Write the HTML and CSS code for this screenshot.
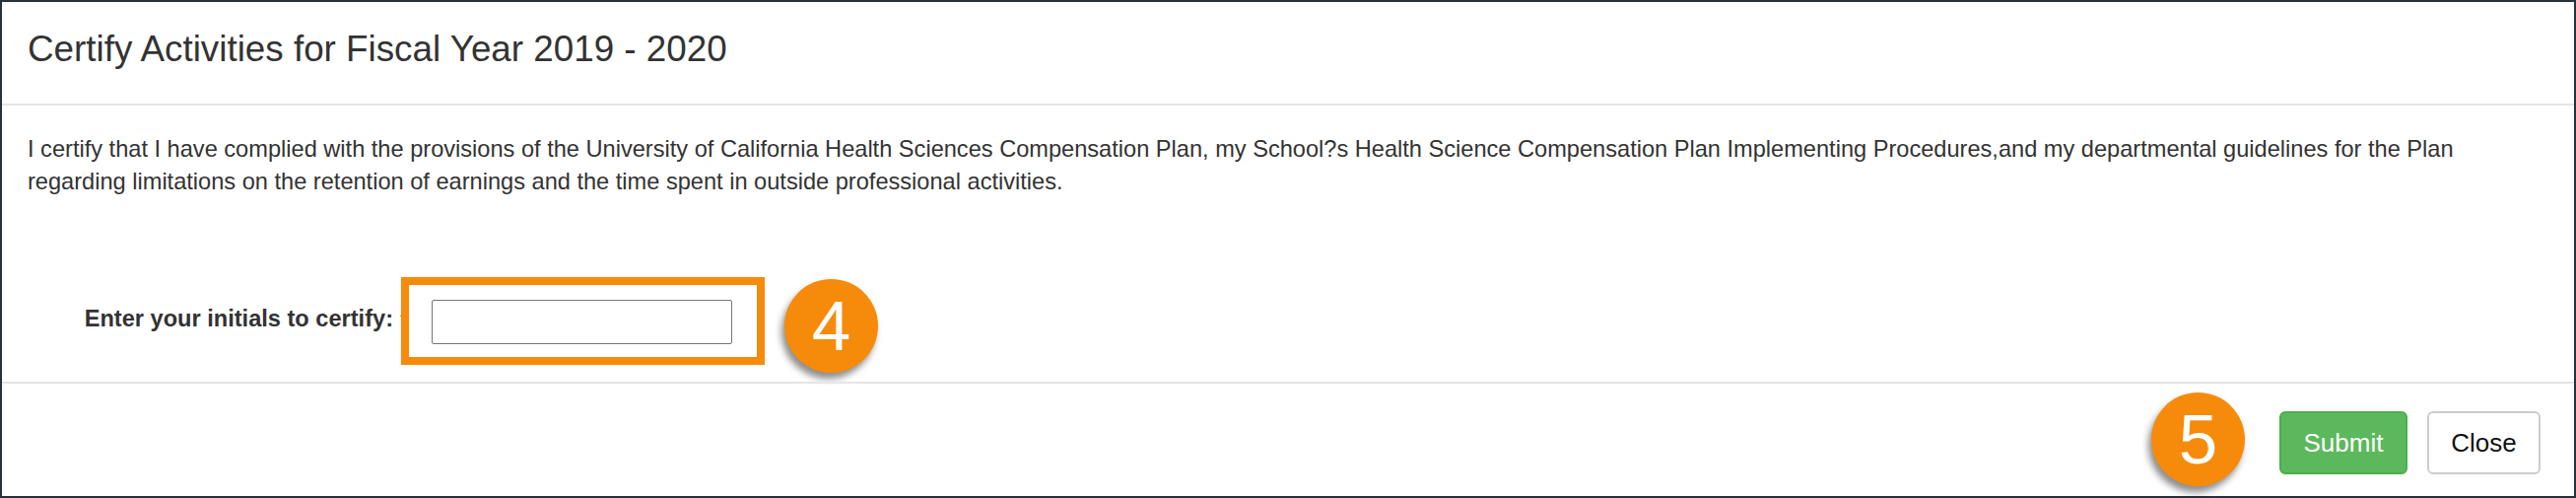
FILE: index.html
```html
<!DOCTYPE html>
<html lang="en">
<head>
<meta charset="utf-8">
<title>Certify Activities</title>
<link rel="stylesheet" href="styles.css">
</head>
<body>
<div class="modal">
  <div class="modal-header">
    <h4 class="modal-title">Certify Activities for Fiscal Year 2019 - 2020</h4>
  </div>
  <div class="modal-body">
    <p class="statement">I certify that I have complied with the provisions of the University of California Health Sciences Compensation Plan, my School?s Health Science Compensation Plan Implementing Procedures,and my departmental guidelines for the Plan regarding limitations on the retention of earnings and the time spent in outside professional activities.</p>
    <div class="form-row">
      <label class="form-label" for="initials">Enter your initials to certify:</label>
      <span class="required">*</span>
      <span class="input-wrap">
        <input class="form-control" id="initials" type="text">
        <span class="highlight"></span>
        <span class="step step-4">4</span>
      </span>
    </div>
  </div>
  <div class="modal-footer">
    <span class="step step-5">5</span>
    <button class="btn btn-success" type="button">Submit</button>
    <button class="btn btn-default" type="button">Close</button>
  </div>
</div>
</body>
</html>
```

FILE: styles.css
```css
html, body {
  margin: 0;
  padding: 0;
  background: #ffffff;
}

body {
  font-family: "Liberation Sans", Arial, Helvetica, sans-serif;
  color: #333333;
}

.modal {
  position: relative;
  box-sizing: border-box;
  width: 2614px;
  height: 505px;
  border: 2px solid #27313d;
  background: #ffffff;
}

.modal-header {
  padding: 28px 26px 35px 26px;
  border-bottom: 2px solid #e5e5e5;
}

.modal-title {
  margin: 0;
  font-size: 36.8px;
  line-height: 40px;
  font-weight: normal;
  color: #333333;
}

.modal-body {
  padding: 28px 26px 38px 26px;
}

.statement {
  margin: 0;
  font-size: 23.6px;
  line-height: 33.3px;
}

.form-row {
  display: flex;
  align-items: center;
  margin-top: 102px;
  height: 45px;
}

.form-label {
  box-sizing: border-box;
  width: 371px;
  text-align: right;
  font-size: 23.6px;
  font-weight: bold;
  line-height: 33px;
  position: relative;
  top: -3px;
}

.required {
  color: #e00000;
  font-size: 23.3px;
  line-height: 33px;
  margin-left: 7px;
  width: 32px;
}

.input-wrap {
  position: relative;
  display: block;
}

.form-control {
  display: block;
  box-sizing: border-box;
  width: 305px;
  height: 45px;
  margin: 0;
  padding: 6px 12px;
  border: 1px solid #767676;
  border-radius: 2px;
  background: #ffffff;
  font-family: "Liberation Sans", Arial, sans-serif;
  font-size: 23.3px;
}

.highlight {
  position: absolute;
  left: -31px;
  right: -33px;
  top: -23px;
  bottom: -21px;
  border: 8px solid #f68b0b;
  pointer-events: none;
}

.step {
  position: absolute;
  display: flex;
  align-items: center;
  justify-content: center;
  width: 95px;
  height: 95px;
  border-radius: 50%;
  background: #f68b0b;
  color: #ffffff;
  font-family: "Liberation Sans", Arial, sans-serif;
  font-size: 71px;
  line-height: 1;
  box-shadow: -3px 6px 7px rgba(0, 0, 0, 0.45);
}

.step-4 {
  left: 358px;
  top: -21px;
}

.step-5 {
  right: 334px;
  top: 9px;
}

.modal-footer {
  position: relative;
  display: flex;
  justify-content: flex-end;
  align-items: center;
  gap: 20px;
  padding: 28px 34px 22px 26px;
  border-top: 2px solid #e5e5e5;
}

.btn {
  box-sizing: border-box;
  height: 64px;
  margin: 0;
  padding: 0;
  border-radius: 6px;
  font-family: "Liberation Sans", Arial, sans-serif;
  font-size: 26px;
  line-height: 1;
  cursor: pointer;
}

.btn-success {
  width: 130px;
  background: #5cb85c;
  border: 2px solid #4cae4c;
  color: #ffffff;
}

.btn-default {
  width: 115px;
  background: #ffffff;
  border: 2px solid #cccccc;
  color: #111111;
}
```
